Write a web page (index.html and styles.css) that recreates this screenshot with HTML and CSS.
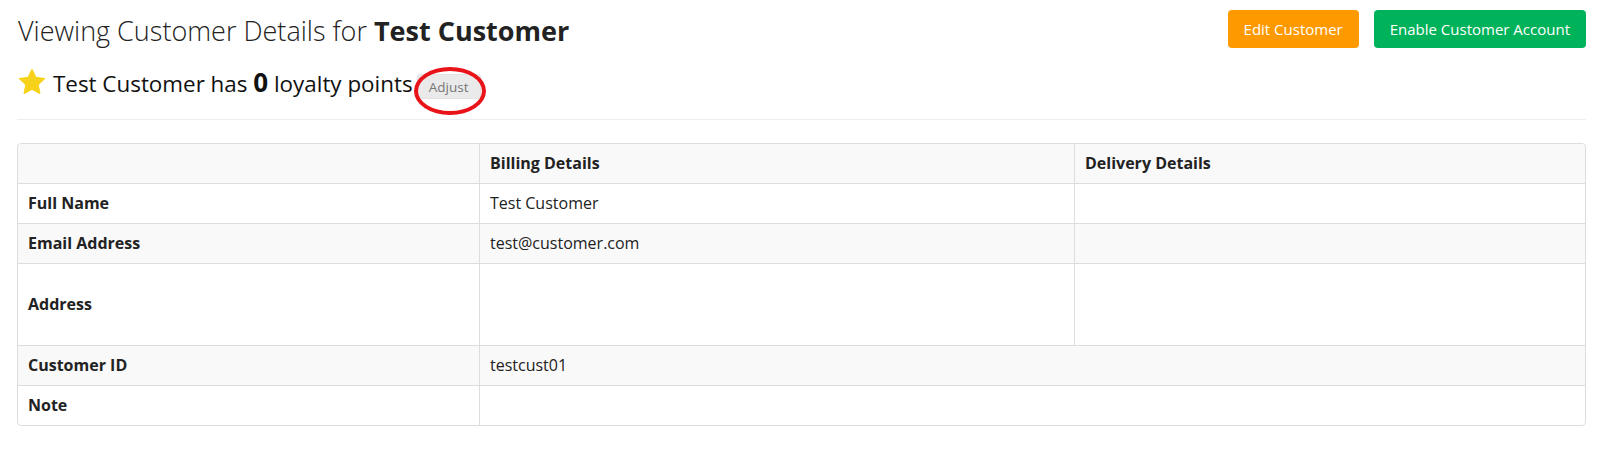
FILE: index.html
```html
<!DOCTYPE html>
<html>
<head>
<meta charset="utf-8">
<link rel="stylesheet" href="styles.css">
</head>
<body>
<div class="page">
  <div class="header">
    <div class="left">
      <h1 class="title">Viewing Customer Details for <strong>Test Customer</strong></h1>
      <div class="loyalty">
        <svg class="star" viewBox="0 0 24 24" width="28" height="28"><path d="M12 1.2l3.3 6.9 7.5 1-5.5 5.2 1.4 7.5L12 18.2l-6.7 3.6 1.4-7.5L1.2 9.1l7.5-1z" fill="#f7d21b" stroke="#f7d21b" stroke-width="1" stroke-linejoin="round"/></svg>
        <span>Test Customer has <b class="pts">0</b> loyalty points</span>
        <span class="adjust-wrap"><button class="adjust">Adjust</button><span class="ring"></span></span>
      </div>
    </div>
    <div class="actions">
      <button class="btn btn-orange">Edit Customer</button>
      <button class="btn btn-green">Enable Customer Account</button>
    </div>
  </div>
  <hr class="sep">
  <table class="details">
    <colgroup><col class="c1"><col class="c2"><col class="c3"></colgroup>
    <thead>
      <tr><th></th><th>Billing Details</th><th>Delivery Details</th></tr>
    </thead>
    <tbody>
      <tr><th>Full Name</th><td>Test Customer</td><td></td></tr>
      <tr class="alt"><th>Email Address</th><td>test@customer.com</td><td></td></tr>
      <tr class="tall"><th>Address</th><td></td><td></td></tr>
      <tr class="alt"><th>Customer ID</th><td colspan="2">testcust01</td></tr>
      <tr><th>Note</th><td colspan="2"></td></tr>
    </tbody>
  </table>
</div>
</body>
</html>
```
FILE: styles.css
```css
html, body { margin: 0; padding: 0; background: #fff; }
body { font-family: "Open Sans", "Liberation Sans", sans-serif; color: #222; }
.page { padding: 10px 14px 0 17px; }
.header { display: flex; justify-content: space-between; align-items: flex-start; }
.title { margin: 4px 0 0 1px; font-size: 27px; font-weight: 300; line-height: 34px; color: #222; }
.title strong { font-weight: 700; }
.loyalty { display: flex; align-items: center; margin-top: 19px; font-size: 22.4px; line-height: 30px; color: #111; }
.star { margin-left: 1px; margin-right: 7px; margin-top: -2px; }
.pts { font-size: 26px; font-weight: 700; }
.adjust-wrap { position: relative; margin-left: 4px; margin-top: 7px; display: inline-block; }
.adjust { display: block; font-family: "Open Sans", "Liberation Sans", sans-serif; font-size: 13.5px; color: #777; background: #eaeaea; border: 1px solid #e2e2e2; border-radius: 3px; width: 64px; height: 25px; padding: 0; line-height: 22px; }
.ring { position: absolute; left: -3px; top: -7px; width: 64px; height: 40px; border: 4px solid #e8141a; border-radius: 50%; }
.actions { display: flex; gap: 15px; }
.btn { font-family: "Open Sans", "Liberation Sans", sans-serif; font-size: 15px; color: #fff; border: none; border-radius: 4px; height: 38px; padding: 0 16px; }
.btn-orange { background: #ff9900; }
.btn-green { background: #00b259; }
.sep { border: none; border-top: 1px solid #eee; margin: 20px 0 23px 0; }
.details { width: 1569px; border-collapse: separate; border-spacing: 0; border: 1px solid #ddd; border-radius: 4px; font-size: 16px; }
.c1 { width: 461px; } .c2 { width: 595px; }
.details th, .details td { text-align: left; padding: 8px 10px; line-height: 23px; height: 23px; border-top: 1px solid #ddd; border-left: 1px solid #ddd; vertical-align: middle; color: #222; }
.details tr > :first-child { border-left: none; }
.details thead th { border-top: none; background: #f9f9f9; font-weight: 700; }
.details tbody th { font-weight: 700; }
.details td { font-weight: 400; }
.details tr.alt th, .details tr.alt td { background: #f9f9f9; }
.details tr.tall th, .details tr.tall td { height: 65px; }
.details thead th:first-child { border-top-left-radius: 4px; }
.details thead th:last-child { border-top-right-radius: 4px; }
```
